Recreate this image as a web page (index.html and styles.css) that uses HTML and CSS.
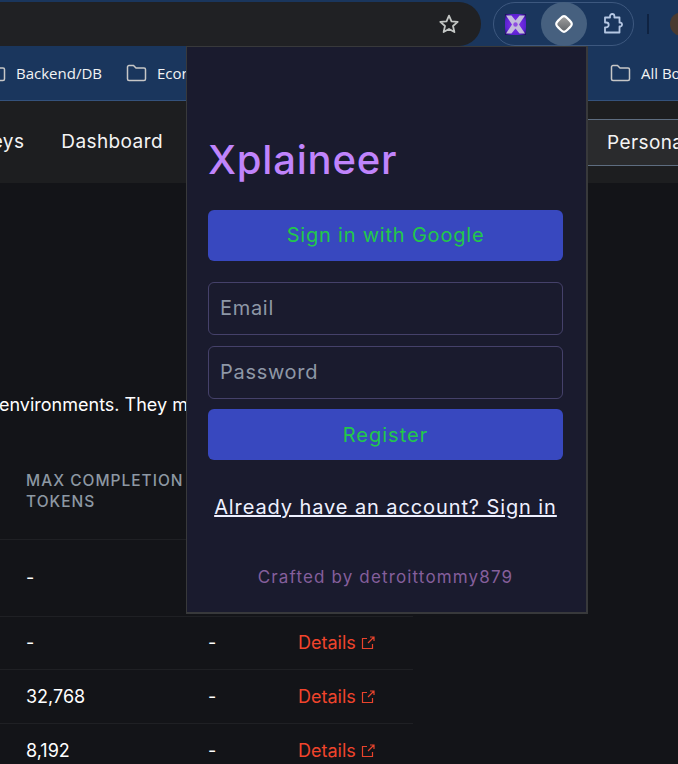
FILE: index.html
```html
<!DOCTYPE html>
<html lang="en">
<head>
<meta charset="utf-8">
<title>Xplaineer</title>
<link rel="stylesheet" href="styles.css">
</head>
<body>
<div class="screen">
  <header class="chrome">
    <div class="toolbar">
      <div class="omnibox">
        <svg class="star" width="22" height="22" viewBox="0 0 22 22"><path d="M11 2.600l2.500 5.700 6.200.6-4.700 4.100 1.400 6.100L11 15.900l-5.400 3.200L7 13 2.300 8.900l6.200-.6z" fill="none" stroke="#c4c7c5" stroke-width="1.800" stroke-linejoin="round"/></svg>
      </div>
      <div class="ext-pill">
        <svg class="ext-x" width="21" height="21" viewBox="0 0 21 21">
          <defs><radialGradient id="xbg" cx="50%" cy="50%" r="70%"><stop offset="0" stop-color="#8f35f5"/><stop offset=".7" stop-color="#5a22d0"/><stop offset="1" stop-color="#150b50"/></radialGradient></defs>
          <rect width="21" height="21" fill="url(#xbg)"/>
          <path d="M1 1.500h5.500l4 5 4-5H20l-6 9 6 9h-5.500l-4-5-4 5H1l6-9z" fill="#c3bddc"/>
          <circle cx="10.500" cy="10.500" r="2.200" fill="#8f4fe0"/>
        </svg>
        <span class="ext-active">
          <svg width="22" height="22" viewBox="0 0 22 22"><defs><linearGradient id="dm" x1="0" y1="0" x2="0" y2="1"><stop offset="0" stop-color="#a0a0a0"/><stop offset="1" stop-color="#5f6368"/></linearGradient></defs><path d="M11 3.200c1.300 0 2.200.8 3.400 2l2.400 2.400c1.200 1.200 2 2.100 2 3.400s-.8 2.200-2 3.400l-2.400 2.400c-1.200 1.200-2.100 2-3.400 2s-2.200-.8-3.400-2l-2.400-2.400c-1.200-1.200-2-2.100-2-3.400s.8-2.200 2-3.400l2.400-2.400c1.200-1.200 2.100-2 3.400-2z" fill="url(#dm)" stroke="#fff" stroke-width="2.200"/></svg>
        </span>
        <svg class="ext-puzzle" width="22" height="22" viewBox="0 0 22 22"><path d="M2 4.500h5V3.200a2.200 2.200 0 0 1 4.400 0v1.300h5.100v5.200h1.200a2 2 0 0 1 0 3.800h-1.200v6H2v-5.200h1.300a2.400 2.400 0 0 0 0-4.800H2z" fill="none" stroke="#b5c7e3" stroke-width="1.800" stroke-linejoin="round"/></svg>
      </div>
      <span class="divider"></span>
      <span class="avatar"></span>
    </div>
    <nav class="bookmarks">
      <span class="bookmark bm-first"><svg class="folder" width="21" height="18" viewBox="0 0 21 18"><path d="M1.500 3a1.500 1.500 0 0 1 1.500-1.500h4.500l2.500 2.500h8a1.500 1.500 0 0 1 1.500 1.500V15a1.500 1.500 0 0 1-1.500 1.500H3A1.500 1.500 0 0 1 1.500 15z" fill="none" stroke="#c7c7c7" stroke-width="1.500"/></svg>Backend/DB</span>
      <span class="bookmark bm-econ"><svg class="folder" width="21" height="18" viewBox="0 0 21 18"><path d="M1.500 3a1.500 1.500 0 0 1 1.500-1.500h4.500l2.500 2.500h8a1.500 1.500 0 0 1 1.500 1.500V15a1.500 1.500 0 0 1-1.500 1.500H3A1.500 1.500 0 0 1 1.500 15z" fill="none" stroke="#c7c7c7" stroke-width="1.500"/></svg>Economics</span>
      <span class="bookmark bm-all"><svg class="folder" width="21" height="18" viewBox="0 0 21 18"><path d="M1.500 3a1.500 1.500 0 0 1 1.500-1.500h4.500l2.500 2.500h8a1.500 1.500 0 0 1 1.500 1.500V15a1.500 1.500 0 0 1-1.500 1.500H3A1.500 1.500 0 0 1 1.500 15z" fill="none" stroke="#c7c7c7" stroke-width="1.500"/></svg>All Bookmarks</span>
    </nav>
  </header>

  <div class="sitenav">
    <span class="nav-keys">API keys</span>
    <span class="nav-dash">Dashboard</span>
    <span class="nav-personal">Personal</span>
  </div>

  <main class="content">
    <p class="intro">environments. They may change</p>
    <div class="table">
      <div class="row head"><span class="cell">MAX COMPLETION<br>TOKENS</span></div>
      <div class="row r1"><span class="cell">-</span></div>
      <div class="row r2"><span class="cell">-</span><span class="cell">-</span><a class="details">Details<svg width="14" height="14" viewBox="0 0 14 14"><path d="M6 2.500H1.500v10h10V8M7 7l5.500-5.500M9 1h4v4" fill="none" stroke="#e8432c" stroke-width="1.200"/></svg></a></div>
      <div class="row r3"><span class="cell">32,768</span><span class="cell">-</span><a class="details">Details<svg width="14" height="14" viewBox="0 0 14 14"><path d="M6 2.500H1.500v10h10V8M7 7l5.500-5.500M9 1h4v4" fill="none" stroke="#e8432c" stroke-width="1.200"/></svg></a></div>
      <div class="row r4"><span class="cell">8,192</span><span class="cell">-</span><a class="details">Details<svg width="14" height="14" viewBox="0 0 14 14"><path d="M6 2.500H1.500v10h10V8M7 7l5.500-5.500M9 1h4v4" fill="none" stroke="#e8432c" stroke-width="1.200"/></svg></a></div>
    </div>
  </main>

  <aside class="popup">
    <h1 class="brand">Xplaineer</h1>
    <button class="btn btn-google">Sign in with Google</button>
    <div class="field field-email">Email</div>
    <div class="field field-pass">Password</div>
    <button class="btn btn-register">Register</button>
    <a class="switch">Already have an account? Sign in</a>
    <p class="credit">Crafted by detroittommy879</p>
  </aside>
</div>
</body>
</html>
```
FILE: styles.css
```css
* { box-sizing: border-box; }
html, body { margin: 0; padding: 0; background: #131418; }
.screen { position: relative; width: 678px; height: 764px; overflow: hidden; background: #131418; }

.chrome { background: #1a365d; height: 101px; border-bottom: 1px solid #34527c; }
.toolbar { display: flex; align-items: center; height: 46px; padding-top: 2px; }
.omnibox { width: 481px; height: 44px; background: #202124; border-radius: 0 22px 22px 0; display: flex; align-items: center; justify-content: flex-end; padding-right: 21px; flex: none; }
.ext-pill { width: 141px; height: 44px; margin-left: 12px; border: 1px solid #3d587f; border-radius: 22px; display: flex; align-items: center; padding-left: 11px; flex: none; }
.ext-active { width: 46px; height: 44px; border-radius: 50%; background: #46607f; margin-left: 15px; display: flex; align-items: center; justify-content: center; flex: none; }
.ext-puzzle { margin-left: 16px; }
.divider { width: 2px; height: 20px; background: #0f2342; margin-left: 13px; flex: none; }
.avatar { width: 24px; height: 24px; border-radius: 50%; background: #4a3a30; margin-left: 21px; flex: none; }

.bookmarks { display: flex; align-items: center; height: 54px; overflow: hidden; font: 15px/18px "Open Sans", sans-serif; color: #f1f3f4; white-space: nowrap; }
.bookmark { display: flex; align-items: center; gap: 10px; flex: none; }
.folder { flex: none; }
.bm-first { margin-left: -15px; }
.bm-econ { margin-left: 24px; width: 100px; overflow: hidden; }
.bm-all { margin-left: 384px; }

.sitenav { height: 82px; background: #1d1e20; display: flex; align-items: center; font: 19px/24px Inter, sans-serif; letter-spacing: .4px; color: #f4f4f4; white-space: nowrap; position: relative; overflow: hidden; }
.nav-keys { margin-left: -56px; flex: none; }
.nav-dash { margin-left: 37px; flex: none; }
.nav-personal { margin-left: auto; flex: none; width: 91px; height: 47px; background: #2a2b2d; border-top: 1px solid #5e6d80; border-bottom: 1px solid #5e6d80; padding-left: 20px; line-height: 45px; overflow: hidden; }

.content { font: 18px/24px Inter, sans-serif; color: #fff; }
.intro { margin: 210px 0 0 -1px; white-space: nowrap; }
.table { width: 413px; margin-top: 50px; }
.row { display: grid; grid-template-columns: 182px 90px 1fr; align-items: center; padding-left: 26px; border-bottom: 1px solid #1f2024; }
.row .cell:first-child { grid-column: 1; }
.head { height: 73px; color: #8d98a3; font-size: 15.500px; line-height: 21px; font-weight: 500; letter-spacing: 1px; padding-bottom: 25px; white-space: nowrap; }
.r1 { height: 77px; }
.r2 { height: 53px; }
.r3 { height: 54px; }
.r4 { height: 54px; }
.details { color: #f0442c; display: flex; align-items: center; gap: 5px; }

.popup { position: absolute; left: 186px; top: 46px; width: 402px; height: 568px; background: #1a1b2e; border: 2px solid #38393b; border-width: 1px 2px 2px 1px; padding: 0 23px 0 21px; display: flex; flex-direction: column; font-family: "Inter", sans-serif; }
.brand { margin: 83px 0 0; font-size: 40px; line-height: 60px; font-weight: 500; letter-spacing: .8px; color: #c084fc; }
.btn { display: block; width: 100%; height: 51px; border: 0; border-radius: 6px; background: #3848bf; color: #22c84a; font: 20px/51px "Inter", sans-serif; letter-spacing: .8px; padding: 0; }
.btn-google { margin-top: 20px; }
.btn-register { margin-top: 10px; padding-top: 1px; letter-spacing: 1px; }
.field { height: 53px; border: 1px solid #45416a; border-radius: 6px; color: #8e97a6; font-size: 20px; line-height: 51px; letter-spacing: .7px; padding-left: 11px; }
.field-email { margin-top: 21px; }
.field-pass { margin-top: 11px; }
.switch { margin-top: 33px; text-align: center; color: #eef0ff; font-size: 20px; line-height: 28px; letter-spacing: .9px; text-decoration: underline; white-space: nowrap; }
.credit { margin: 44px 0 0; text-align: center; color: #855f9c; font-size: 17px; line-height: 24px; letter-spacing: 1.150px; white-space: nowrap; }
```
